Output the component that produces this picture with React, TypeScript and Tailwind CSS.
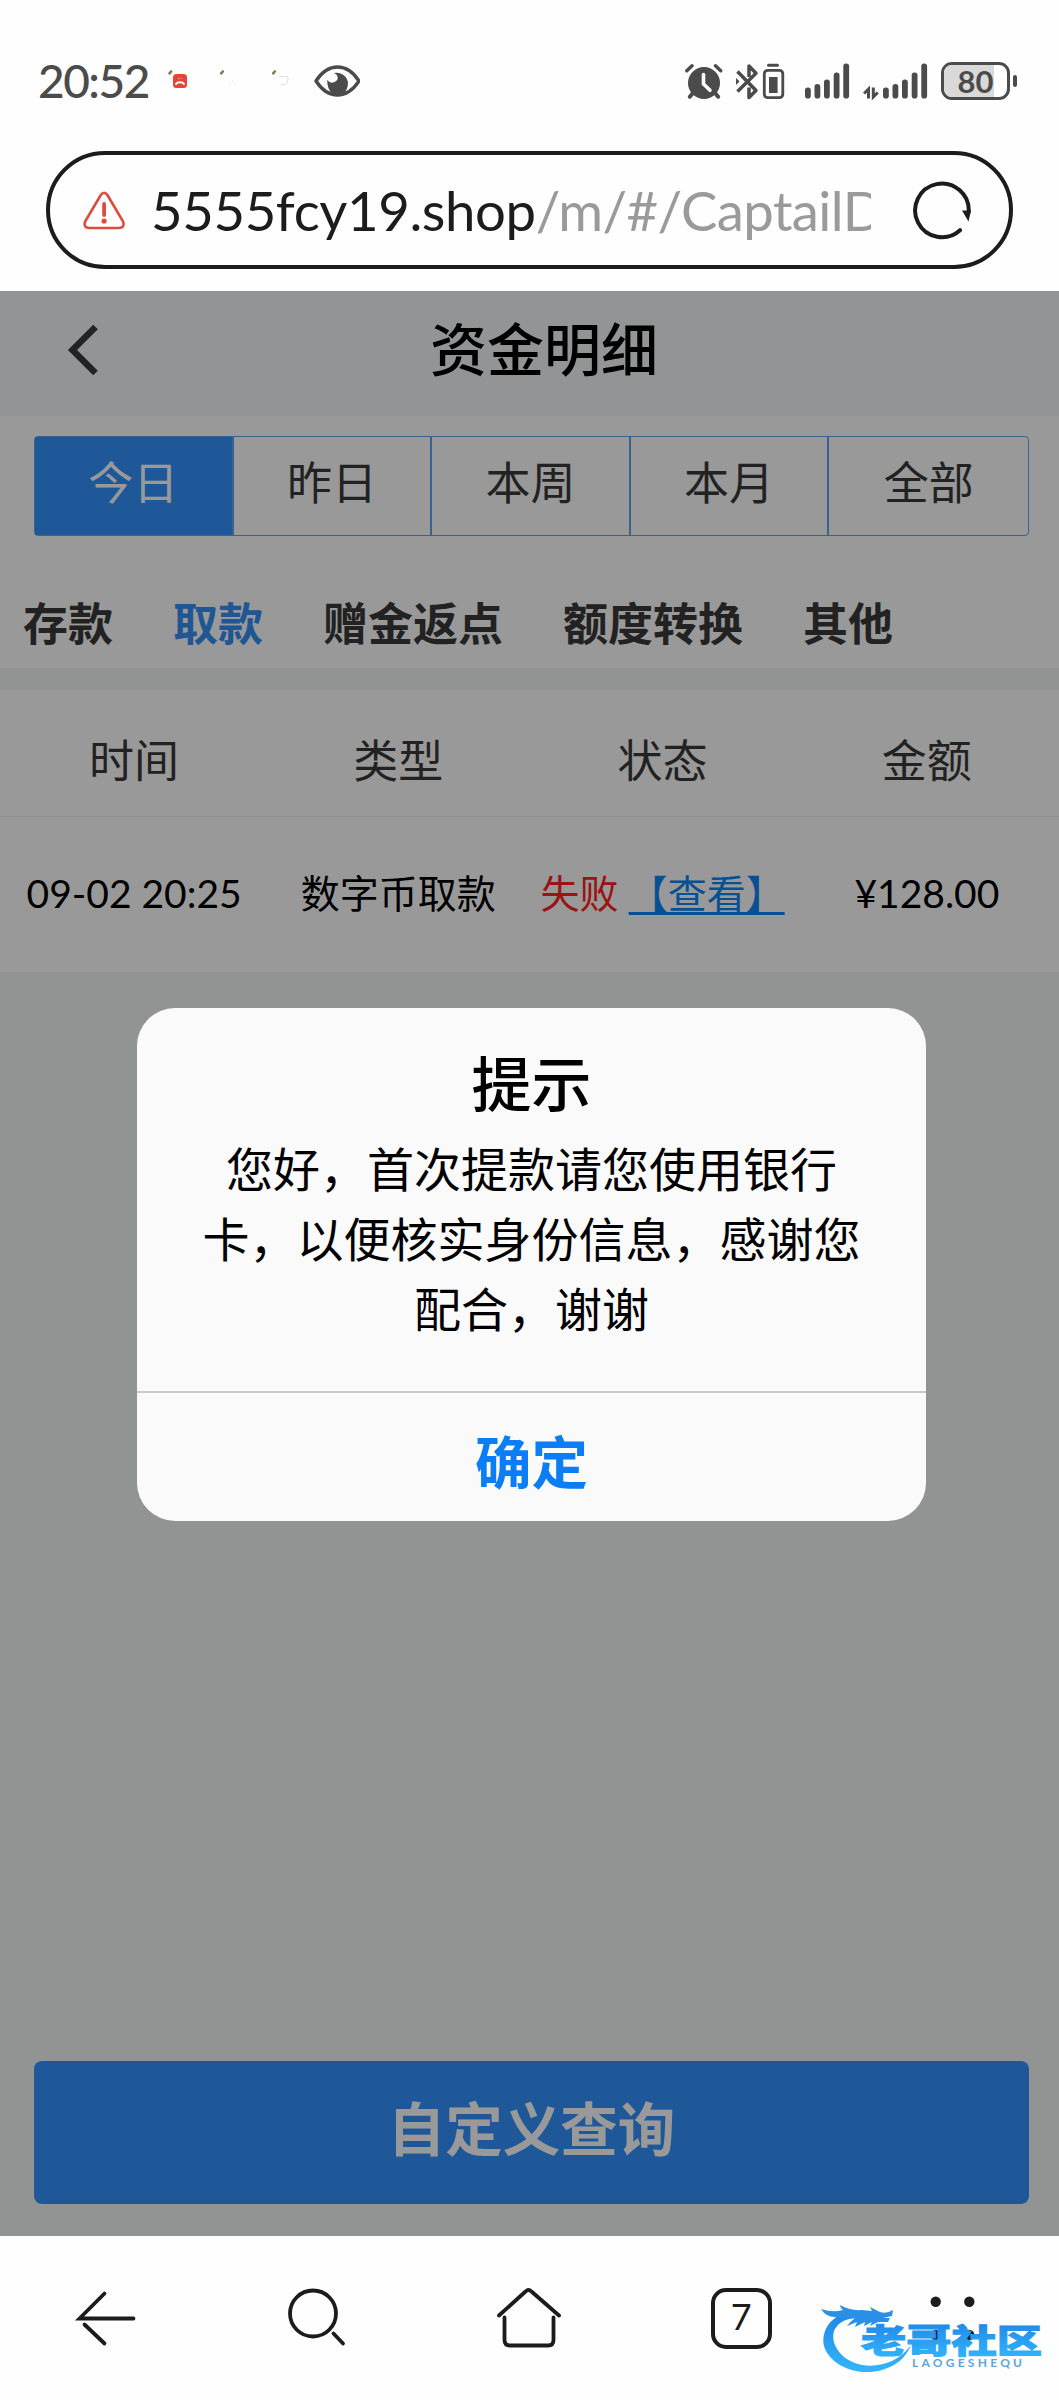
import { useState } from 'react';

// #region --- Types & data ---
type RecordRow = {
  id: number;
  time: string;
  type: string;
  status: string;
  amount: string;
};

const RANGES = ['今日', '昨日', '本周', '本月', '全部'];
const CATEGORIES = ['存款', '取款', '赠金返点', '额度转换', '其他'];
const COLUMNS = ['时间', '类型', '状态', '金额'];

const RECORDS: RecordRow[] = [
  { id: 1, time: '09-02 20:25', type: '数字币取款', status: '失败', amount: '¥128.00' },
];

const SIGNAL_BARS = [
  { x: 0, top: 24 },
  { x: 9.5, top: 20.5 },
  { x: 19, top: 16 },
  { x: 28.7, top: 9 },
  { x: 38.3, top: 0 },
];
// #endregion

// #region --- Status bar ---
function NotificationDots() {
  return (
    <svg className="ml-[17px] h-[40px] w-[128px]" viewBox="167 62 128 40" fill="none">
      <g stroke="#8a7355" strokeWidth="2.6" strokeLinecap="round">
        <path d="M169.5 74.3l1.6-1.8" />
        <path d="M221.2 74.3l1.6-1.8" />
        <path d="M273.2 74.3l1.6-1.8" />
      </g>
      <rect x="173" y="75" width="14" height="14" rx="3.5" fill="#ea4335" />
      <path d="M176 85c1.5-2.4 6.500-2.400 8 0" stroke="#fff" strokeWidth="2" strokeLinecap="round" />
      <path d="M178 79.500h1.500M181 79.500h.8" stroke="#fbb" strokeWidth="1.200" />
      <path d="M229 84.500h1M232 82h1M235 85h1" stroke="#ececec" strokeWidth="2" />
      <path d="M279 77.500h8.500q1.500 3-1 7q-3 3-6 .5" stroke="#e0e0e0" strokeWidth="1" />
    </svg>
  );
}

function EyeIcon() {
  return (
    <svg className="ml-[19px] h-[40px] w-[46px]" viewBox="314 60.500 46 40" fill="none">
      <path
        d="M316 80.500Q325 66.500 337.500 66.500T359 80.500Q350 94.500 337.500 94.500T316 80.500Z"
        stroke="#4b4b4b"
        strokeWidth="3.400"
        strokeLinejoin="round"
      />
      <path
        d="M334 72.500A11.500 11.500 0 0 1 348 82Q348 88.500 343.500 93.500H332.500Q327 88.500 327.200 79.500Q330.500 83.500 334.500 81.500T337.500 76Q337 73.500 334 72.500Z"
        fill="#4b4b4b"
      />
    </svg>
  );
}

function AlarmIcon() {
  return (
    <svg className="h-[40px] w-[38px]" viewBox="686 60 38 40" fill="none" stroke="#4b4b4b" strokeLinecap="round">
      <circle cx="705" cy="82" r="16" fill="#4b4b4b" stroke="none" />
      <path d="M687.800 69.800l5.200-5M716.500 64.800l5.200 5" strokeWidth="3.400" />
      <path d="M694 92l-3.200 3.800M716 92l3.200 3.800" strokeWidth="4" />
      <path d="M704.500 73.500v9.500l6.500 6.300" stroke="#fefefe" strokeWidth="3.600" />
    </svg>
  );
}

function BluetoothIcon() {
  return (
    <svg className="ml-[13px] h-[40px] w-[49px]" viewBox="737 60 49 40" fill="none" stroke="#4b4b4b">
      <g strokeWidth="3.500" strokeLinejoin="round">
        <path d="M738.500 90.500L757 72.300L750 65v11M738.500 70.500L757 89.500L750 96.500v-10" />
      </g>
      <path d="M737 77l3.500 3.500l-3.500 3.500z" fill="#4b4b4b" stroke="none" />
      <rect x="765.300" y="69.300" width="18.500" height="27.400" rx="3.500" strokeWidth="2.800" />
      <rect x="770" y="76" width="8.600" height="16" fill="#4b4b4b" stroke="none" />
      <path d="M769.500 64.200h9" strokeWidth="3" strokeLinecap="round" />
    </svg>
  );
}

function SignalBars() {
  return (
    <svg className="h-[40px] w-[45px]" viewBox="0 -2.500 45 40">
      {SIGNAL_BARS.map(bar => (
        <rect key={bar.x} x={bar.x} y={bar.top} width="5.800" height={35 - bar.top} rx="2.800" fill="#4b4b4b" />
      ))}
    </svg>
  );
}

function DataArrows() {
  return (
    <svg className="ml-[13px] h-[40px] w-[16px]" viewBox="863 60 16 40" fill="none" stroke="#4b4b4b" strokeWidth="3">
      <path d="M864 92.500l4.500-4.500v9.500M873.300 86.500v9.500l4.500-4.500" />
    </svg>
  );
}

function BatteryIcon() {
  return (
    <div className="ml-[13px] flex items-center gap-[3px]">
      <div className="relative flex h-[38px] w-[69px] items-center justify-center overflow-hidden rounded-[11px] border-[3px] border-[#4b4b4b]">
        <div className="absolute inset-y-0 left-0 w-[50px] bg-[#d9d9d9]" />
        <span className="relative text-[31px] leading-none font-bold text-[#4b4b4b]">80</span>
      </div>
      <div className="h-[12px] w-[4px] rounded-[2px] bg-[#4b4b4b]" />
    </div>
  );
}

function StatusBar() {
  return (
    <div className="flex h-[151px] items-start justify-between pt-[61px] pr-[42px] pl-[38px]">
      <div className="flex h-[40px] items-center">
        <span className="w-[112px] text-[46px] leading-[40px] font-medium tracking-[-1.5px] whitespace-nowrap text-[#4b4b4b]">
          20:52
        </span>
        <NotificationDots />
        <EyeIcon />
      </div>
      <div className="flex h-[40px] items-center">
        <AlarmIcon />
        <BluetoothIcon />
        <div className="ml-[20px] flex">
          <SignalBars />
        </div>
        <DataArrows />
        <div className="ml-[4px] flex">
          <SignalBars />
        </div>
        <BatteryIcon />
      </div>
    </div>
  );
}
// #endregion

function AddressBar() {
  return (
    <div className="mx-[46px] flex h-[118px] items-center rounded-full border-[4px] border-[#1c1c1c] pl-[31px]">
      <svg className="h-[42px] w-[46px]" viewBox="81.500 188 46 42" fill="none" stroke="#dd4b3e">
        <path
          d="M101 194q3.300-4.500 6.600 0l15.600 26.300q2.300 6.200-3.700 6.700h-30.400q-6-.5-3.700-6.700z"
          transform="translate(.3 0)"
          strokeWidth="2.600"
          strokeLinejoin="round"
        />
        <path d="M104.600 203v11" strokeWidth="3.800" strokeLinecap="round" />
        <circle cx="104.600" cy="220" r="2.600" fill="#dd4b3e" stroke="none" />
      </svg>
      <div className="ml-[24px] w-[720px] overflow-hidden text-[54.500px] leading-[80px] tracking-[-0.4px] whitespace-nowrap text-[#1c1c1c]">
        5555fcy19.shop<span className="text-[#9a9a9a] tracking-[-0.6px]">/m/#/CaptailD</span>
      </div>
      <svg className="ml-auto mr-[37px] h-[60px] w-[60px]" viewBox="911.500 179 60 60" fill="none">
        <path d="M959.500 229.200A26.800 26.800 0 1 1 968.200 211" stroke="#1c1c1c" strokeWidth="4" strokeLinecap="round" />
        <path d="M961.500 209.500l9 0l-2.500 11z" fill="#1c1c1c" />
      </svg>
    </div>
  );
}

function PageHeader() {
  return (
    <div className="flex h-[125px] items-center bg-[#f3f7f9] pb-[8px]">
      <svg className="ml-[66px] h-[52px] w-[36px]" viewBox="66 324 36 52" fill="none">
        <path d="M95.500 327L72.500 350L95.500 373" stroke="#393b3c" strokeWidth="6.500" />
      </svg>
      <h1 className="mr-[73px] flex-1 text-center text-[57px] leading-none font-medium text-black">资金明细</h1>
    </div>
  );
}

function Filters() {
  const [range, setRange] = useState('今日');
  const [category, setCategory] = useState('取款');

  return (
    <div className="h-[252px] bg-white pt-[20px]">
      <div className="mr-[30px] ml-[34px] grid h-[100px] grid-cols-5 divide-x-2 divide-[#5fa3f0] rounded-[4px] border-[1.500px] border-[#5fa3f0]">
        {RANGES.map(item => (
          <button
            key={item}
            onClick={() => setRange(item)}
            className={
              item === range
                ? 'bg-[#3293ff] pb-[5px] text-[45px] leading-none text-white'
                : 'pb-[5px] text-[45px] leading-none text-[#393939]'
            }
          >
            {item}
          </button>
        ))}
      </div>
      <div className="mt-[46px] flex gap-[60px] pl-[23px] text-[45px] leading-[84px] font-bold">
        {CATEGORIES.map(item => (
          <button
            key={item}
            onClick={() => setCategory(item)}
            className={item === category ? 'text-[#3590f5]' : 'text-[#393939]'}
          >
            {item}
          </button>
        ))}
      </div>
    </div>
  );
}

function RecordTable() {
  return (
    <div className="mt-[22px] bg-white text-center">
      <div className="grid h-[127px] grid-cols-4 border-b border-[#f2f2f2] pl-[2px] text-[45px] leading-[143px] text-[#393939]">
        {COLUMNS.map(col => (
          <div key={col}>{col}</div>
        ))}
      </div>
      {RECORDS.map(row => (
        <div key={row.id} className="grid h-[155px] grid-cols-4 pl-[2px] text-[39px] leading-[153px] whitespace-nowrap text-black">
          <div>{row.time}</div>
          <div>{row.type}</div>
          <div className="flex justify-center gap-[10px]">
            <span className="text-[#ff2222]">{row.status}</span>
            <a className="text-[#0d86f5] underline decoration-[3px] underline-offset-[4px]">【查看】</a>
          </div>
          <div>{row.amount}</div>
        </div>
      ))}
    </div>
  );
}

function NoticeDialog() {
  return (
    <div className="absolute inset-0 bg-black/40">
      <div className="mt-[717px] ml-[137px] flex h-[513px] w-[789px] flex-col rounded-[38px] bg-[#fafafa] text-center text-black">
        <div className="flex-1">
          <h2 className="pt-[31px] text-[60px] leading-[90px] font-medium">提示</h2>
          <p className="mx-auto mt-[5px] w-[660px] text-[47px] leading-[70px]">
            您好，首次提款请您使用银行卡，以便核实身份信息，感谢您配合，谢谢
          </p>
        </div>
        <button className="h-[130px] border-t-2 border-[#c8c8c8] pt-[10px] text-[56.500px] leading-none font-bold text-[#0a7df7]">
          确定
        </button>
      </div>
    </div>
  );
}

function Watermark() {
  return (
    <svg className="absolute top-[60px] left-[815px] h-[84px] w-[240px]" viewBox="815 2296 240 84">
      <defs>
        <linearGradient id="wm" x1="0" y1="0" x2="0" y2="1">
          <stop offset="0" stopColor="#1f86e6" />
          <stop offset="1" stopColor="#33b6fd" />
        </linearGradient>
      </defs>
      <path
        d="M862 2313C836 2308 820 2328 824 2346C830 2366 858 2377 882 2370C898 2365 906 2357 911 2345C900 2361 880 2368 862 2365C842 2361 830 2345 834 2331C838 2321 850 2316 862 2319Z"
        fill="url(#wm)"
      />
      <path
        d="M821 2309q12 4 22 1q-3-2-3-5q10 6 22 5l10 1l-2-4l10 5q7 2 13-2l-1 6l-9 2h7l-2 4h-10l-8 4l2-4l-8 4l1-4l-10 5l2-5l-10 4q4-5 8-8q-12 2-20-1q-9 0-14-8z"
        fill="#2a8fe6"
      />
      <text
        x="861"
        y="2353"
        fontSize="33"
        fontWeight="900"
        textLength="181"
        lengthAdjust="spacingAndGlyphs"
        fill="url(#wm)"
        stroke="url(#wm)"
        strokeWidth="1"
      >
        老哥社区
      </text>
      <text x="912" y="2366.500" fontSize="12" fontWeight="700" textLength="110" fill="#5ba6dd">
        LAOGESHEQU
      </text>
    </svg>
  );
}

function BottomNav() {
  return (
    <div className="relative grid h-[164px] grid-cols-5 justify-items-center bg-[#fefefe] pt-[48px]">
      <svg className="h-[68px] w-[68px]" viewBox="72 2284 68 68" fill="none" stroke="#1c1c1c" strokeWidth="3.800" strokeLinecap="round">
        <path d="M104.500 2293.500L79.500 2318.500H133.500M84.500 2324.500L104.500 2343.500" />
      </svg>
      <svg className="h-[68px] w-[68px]" viewBox="284 2284 68 68" fill="none" stroke="#1c1c1c" strokeWidth="3.800">
        <circle cx="313" cy="2313.500" r="23" />
        <path d="M333.500 2333.500L343 2343.500" strokeLinecap="round" />
      </svg>
      <svg className="h-[68px] w-[68px]" viewBox="496 2284 68 68" fill="none" stroke="#1c1c1c" strokeWidth="3.800" strokeLinecap="round">
        <path d="M500 2315.500L526.500 2291.500Q529.500 2288.500 532.500 2291.500L560 2315.500" />
        <path d="M505.500 2317.500V2340Q505.500 2345.500 511 2345.500H549Q554.500 2345.500 554.500 2340V2317.500" />
      </svg>
      <div className="mt-[4px] flex h-[61px] w-[61px] items-center justify-center rounded-[15px] border-[4px] border-[#1c1c1c] pb-[5px] text-[36px] leading-none text-[#1c1c1c]">
        7
      </div>
      <svg className="h-[68px] w-[68px]" viewBox="919 2284 68 68" fill="#1c1c1c">
        <circle cx="935.700" cy="2301.700" r="5.200" />
        <circle cx="969.300" cy="2301.700" r="5.200" />
        <circle cx="935.700" cy="2335" r="5.200" />
        <circle cx="969.300" cy="2335" r="5.200" />
      </svg>
      <Watermark />
    </div>
  );
}

export default function App() {
  return (
    <div className="flex h-[2400px] w-[1059px] flex-col overflow-hidden bg-[#fefefe] font-['Lato','Noto_Sans_CJK_SC',sans-serif]">
      <StatusBar />
      <AddressBar />
      <div className="relative mt-[22px] flex h-[1945px] flex-col bg-[#f2f7f4]">
        <PageHeader />
        <Filters />
        <RecordTable />
        <button className="mt-auto mr-[30px] mb-[32px] ml-[34px] h-[143px] rounded-[8px] bg-[#3293ff] pb-[8px] text-[57.500px] leading-none font-bold text-white">
          自定义查询
        </button>
        <NoticeDialog />
      </div>
      <BottomNav />
    </div>
  );
}
